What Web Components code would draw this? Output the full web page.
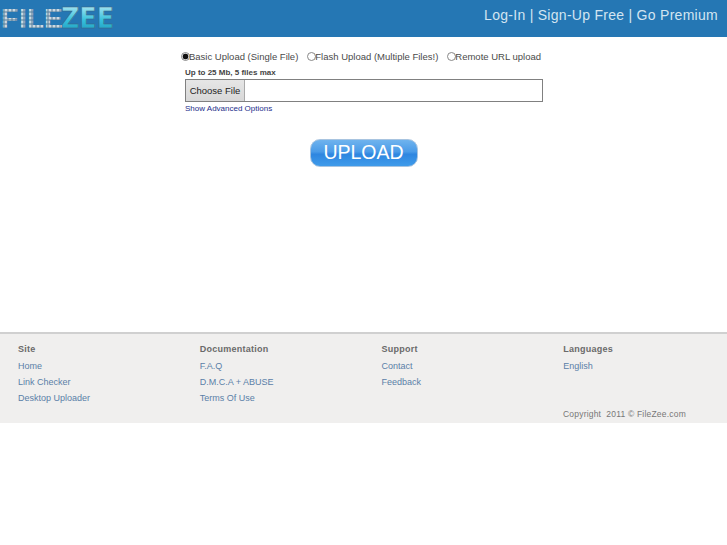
<!DOCTYPE html>
<html>
<head>
<meta charset="utf-8">
<title>FileZee</title>
<style>
    html, body { margin: 0; padding: 0; background: #fff; }
    body { font-family: "Liberation Sans", Arial, sans-serif; }
</style>
</head>
<body>
<fz-header></fz-header>
<fz-upload></fz-upload>
<fz-footer></fz-footer>

<script>
// ### Top bar: logo and account links ###
class FzHeader extends HTMLElement {
    constructor() {
        super();
        this.attachShadow({ mode: 'open' });
        this.shadowRoot.innerHTML = `
            <style>
                :host {
                    display: flex;
                    justify-content: space-between;
                    align-items: center;
                    height: 37px;
                    background: #2577b4;
                    overflow: hidden;
                }
                svg { display: block; }
                nav {
                    color: #d3e5f1;
                    font-size: 14px;
                    letter-spacing: 0.28px;
                    padding-right: 9px;
                    margin-top: -8px;
                }
            </style>
            <svg width="120" height="37" viewBox="0 0 120 37">
                <defs>
                    <pattern id="dots" width="4" height="4" patternUnits="userSpaceOnUse">
                        <rect width="4" height="4" fill="#5f859f"/>
                        <rect x=".6" y=".6" width="2.8" height="2.8" fill="#d6e2ea"/>
                        <rect x="1.6" y="1.6" width=".8" height=".8" fill="#8fabc0"/>
                    </pattern>
                    <linearGradient id="zee" x1="0" y1="0" x2="0" y2="1">
                        <stop offset="0" stop-color="#c4eef7"/>
                        <stop offset=".55" stop-color="#35c0dc"/>
                        <stop offset="1" stop-color="#1a93b8"/>
                    </linearGradient>
                </defs>
                <text x="1 19 27 44" y="28" font-family="Liberation Sans" font-weight="700" font-size="28" fill="url(#dots)">FILE</text>
                <text x="61" y="28" font-family="DejaVu Sans" font-weight="700" font-size="28" textLength="53" lengthAdjust="spacingAndGlyphs" fill="url(#zee)" stroke="#3f6580" stroke-width=".6">ZEE</text>
            </svg>
            <nav>Log-In | Sign-Up Free | Go Premium</nav>
        `;
    }
}

// ### Upload form: mode radios, file picker, big button ###
class FzUpload extends HTMLElement {
    constructor() {
        super();
        this.attachShadow({ mode: 'open' });
        this.shadowRoot.innerHTML = `
            <style>
                :host {
                    display: block;
                    box-sizing: border-box;
                    height: 295px;
                    padding: 13px 0 0 180px;
                    color: #4a4a4a;
                    font-size: 9.5px;
                }
                .modes {
                    display: flex;
                    height: 13px;
                    align-items: center;
                }
                label { display: flex; align-items: center; margin-right: 8px; }
                input {
                    appearance: none;
                    width: 7px;
                    height: 7px;
                    margin: 0 -1px 0 1px;
                    border: 1px solid #888;
                    border-radius: 50%;
                    background: #fff;
                    box-sizing: content-box;
                }
                input:checked { background: radial-gradient(circle, #111 0 2.6px, #fff 3.2px); }
                .inner { margin-left: 5px; }
                .limit {
                    margin-top: 3px;
                    font-size: 8px;
                    font-weight: 700;
                    line-height: 13px;
                    color: #444;
                }
                .picker {
                    display: flex;
                    box-sizing: border-box;
                    width: 358px;
                    height: 23px;
                    border: 1px solid #808080;
                }
                button.choose {
                    width: 59px;
                    padding: 0;
                    border: 0;
                    border-right: 1px solid #aaa;
                    background: linear-gradient(#e6e6e6, #d8d8d8);
                    color: #222;
                    white-space: nowrap;
                    font: 9.5px "Liberation Sans", Arial, sans-serif;
                }
                .advanced {
                    font-size: 8px;
                    line-height: 13px;
                    color: #1c2d8a;
                }
                .go {
                    display: flex;
                    justify-content: center;
                    margin: 24px 0 0 -180px;
                }
                .go span {
                    display: block;
                    box-sizing: border-box;
                    width: 108px;
                    height: 28px;
                    border: 1px solid #a8c4e0;
                    border-radius: 10px;
                    background: linear-gradient(#6fb3ee 0, #4a9be8 45%, #2e86e0 55%, #3f9bea 100%);
                    color: #fff;
                    text-align: center;
                    font-size: 19.5px;
                    line-height: 25px;
                }
            </style>
            <div class="modes">
                <label><input type="radio" name="mode" checked>Basic Upload (Single File)</label>
                <label><input type="radio" name="mode">Flash Upload (Multiple Files!)</label>
                <label><input type="radio" name="mode">Remote URL upload</label>
            </div>
            <div class="inner">
                <div class="limit">Up to 25 Mb, 5 files max</div>
                <div class="picker"><button class="choose">Choose File</button></div>
                <div class="advanced">Show Advanced Options</div>
            </div>
            <div class="go"><span>UPLOAD</span></div>
        `;
    }
}

// One footer column: heading attribute plus slotted links.
class FzColumn extends HTMLElement {
    constructor() {
        super();
        this.attachShadow({ mode: 'open' });
        this.shadowRoot.innerHTML = `
            <style>
                :host { display: block; padding-left: 18px; }
                h4 {
                    margin: 0 0 1px;
                    font-size: 9px;
                    line-height: 16px;
                    color: #6a6a6a;
                    letter-spacing: 0.25px;
                }
                ::slotted(a) {
                    display: block;
                    font-size: 9px;
                    line-height: 16px;
                    color: #5a80a8;
                }
            </style>
            <h4>${this.getAttribute('heading') || ''}</h4>
            <slot></slot>
        `;
    }
}

class FzFooter extends HTMLElement {
    constructor() {
        super();
        this.attachShadow({ mode: 'open' });
        this.shadowRoot.innerHTML = `
            <style>
                :host {
                    display: block;
                    box-sizing: border-box;
                    height: 91px;
                    padding-top: 7px;
                    background: #f0efee;
                    border-top: 2px solid #d0d0d0;
                    position: relative;
                }
                .cols { display: grid; grid-template-columns: repeat(4, 1fr); }
                .copy {
                    position: absolute;
                    left: 563px;
                    top: 74px;
                    font-size: 8.5px;
                    line-height: 12px;
                    color: #777;
                    letter-spacing: 0.2px;
                }
            </style>
            <div class="cols"><slot></slot></div>
            <div class="copy">Copyright&nbsp; 2011 © FileZee.com</div>
        `;
        this.innerHTML = `
            <fz-column heading="Site"><a>Home</a><a>Link Checker</a><a>Desktop Uploader</a></fz-column>
            <fz-column heading="Documentation"><a>F.A.Q</a><a>D.M.C.A + ABUSE</a><a>Terms Of Use</a></fz-column>
            <fz-column heading="Support"><a>Contact</a><a>Feedback</a></fz-column>
            <fz-column heading="Languages"><a>English</a></fz-column>
        `;
    }
}

customElements.define('fz-header', FzHeader);
customElements.define('fz-upload', FzUpload);
customElements.define('fz-column', FzColumn);
customElements.define('fz-footer', FzFooter);
</script>
</body>
</html>
